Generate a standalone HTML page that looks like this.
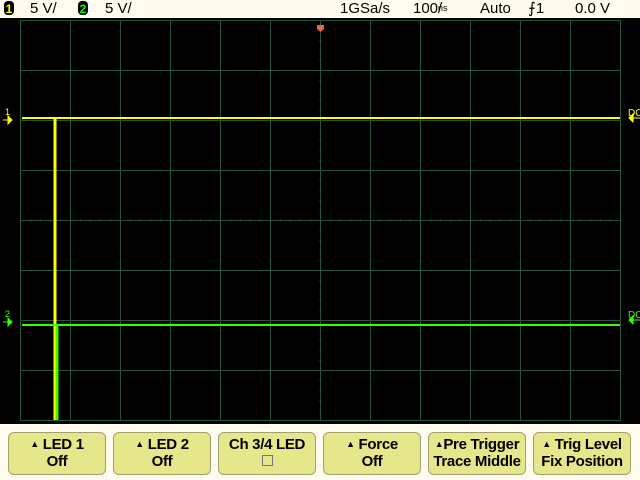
<!DOCTYPE html>
<html><head><style>
body{margin:0;width:640px;height:480px;background:#000;overflow:hidden;font-family:"Liberation Sans",sans-serif;}
.top{position:absolute;left:0;top:0;width:640px;height:18px;background:#fffbee;font-size:15px;color:#000;}
.top span{position:absolute;top:0;line-height:17px;}
.badge{display:inline-block;width:10px;height:14px;border-radius:4px;background:#000;font-size:12px;line-height:14px;text-align:center;font-weight:bold;margin-top:1px;}
.bot{position:absolute;left:0;top:424px;width:640px;height:56px;background:#fffbee;}
.btn{position:absolute;top:8px;width:98px;height:43px;background:#e6e68a;border:1px solid #a0a070;border-radius:6px;text-align:center;font-size:15px;font-weight:bold;line-height:17px;padding-top:3px;box-sizing:border-box;color:#000;letter-spacing:-0.3px;}
.tri{font-size:9px;vertical-align:2px;}
</style></head><body>
<div class="top">
<span style="left:4px"><span class="badge" style="color:#ff0">1</span></span>
<span style="left:30px">5 V/</span>
<span style="left:78px"><span class="badge" style="color:#0f0">2</span></span>
<span style="left:105px">5 V/</span>
<span style="left:340px">1GSa/s</span>
<span style="left:413px">100<span style="font-size:9px">ns</span>/</span>
<span style="left:480px">Auto</span>
<span style="left:528px">⨍1</span>
<span style="left:575px">0.0 V</span>
</div>
<svg style="position:absolute;left:0;top:0" width="640" height="424">
<g stroke="#22553a" stroke-width="1" fill="none">
<rect x="20.5" y="20.5" width="600" height="400"/>
<path d="M70.5 20V420M120.5 20V420M170.5 20V420M220.5 20V420M270.5 20V420M320.5 20V420M370.5 20V420M420.5 20V420M470.5 20V420M520.5 20V420M570.5 20V420"/>
<path d="M20 70.5H620M20 120.5H620M20 170.5H620M20 220.5H620M20 270.5H620M20 320.5H620M20 370.5H620"/>
</g>
<path d="M320.5 20V420M20 220.5H620" stroke="#22553a" stroke-dasharray="1 9" stroke-width="2"/>
<path d="M317 25h7v4l-3.5 3l-3.5-3z" fill="#f06040"/>
<path d="M22 118H620" stroke="#ffff00" stroke-width="2"/>
<path d="M55 118V420" stroke="#ffff00" stroke-width="3"/>
<path d="M22 325H620" stroke="#33ff00" stroke-width="2"/>
<path d="M57 325V420" stroke="#33ff00" stroke-width="3"/>
<path d="M3 120h8M8 116l4 4l-4 4z" fill="#ff0" stroke="#ff0"/><text x="5" y="115" font-size="9" fill="#ff0">1</text>
<path d="M3 322h8M8 318l4 4l-4 4z" fill="#3f0" stroke="#3f0"/><text x="5" y="317" font-size="9" fill="#3f0">2</text>
<path d="M640 118h-10M633 114l-4 4l4 4z" fill="#ff0" stroke="#ff0"/><text x="628" y="116" font-size="10" fill="#ff0">DC</text>
<path d="M640 320h-10M633 316l-4 4l4 4z" fill="#3f0" stroke="#3f0"/><text x="628" y="318" font-size="10" fill="#3f0">DC</text>
</svg>
<div class="bot">
<div class="btn" style="left:8px"><span class="tri">▲</span> LED 1<br>Off</div>
<div class="btn" style="left:113px"><span class="tri">▲</span> LED 2<br>Off</div>
<div class="btn" style="left:218px">Ch 3/4 LED<br><span style="display:inline-block;width:9px;height:9px;border:1px solid #777;"></span></div>
<div class="btn" style="left:323px"><span class="tri">▲</span> Force<br>Off</div>
<div class="btn" style="left:428px"><span class="tri">▲</span>Pre Trigger<br>Trace Middle</div>
<div class="btn" style="left:533px"><span class="tri">▲</span> Trig Level<br>Fix Position</div>
</div>
</body></html>
